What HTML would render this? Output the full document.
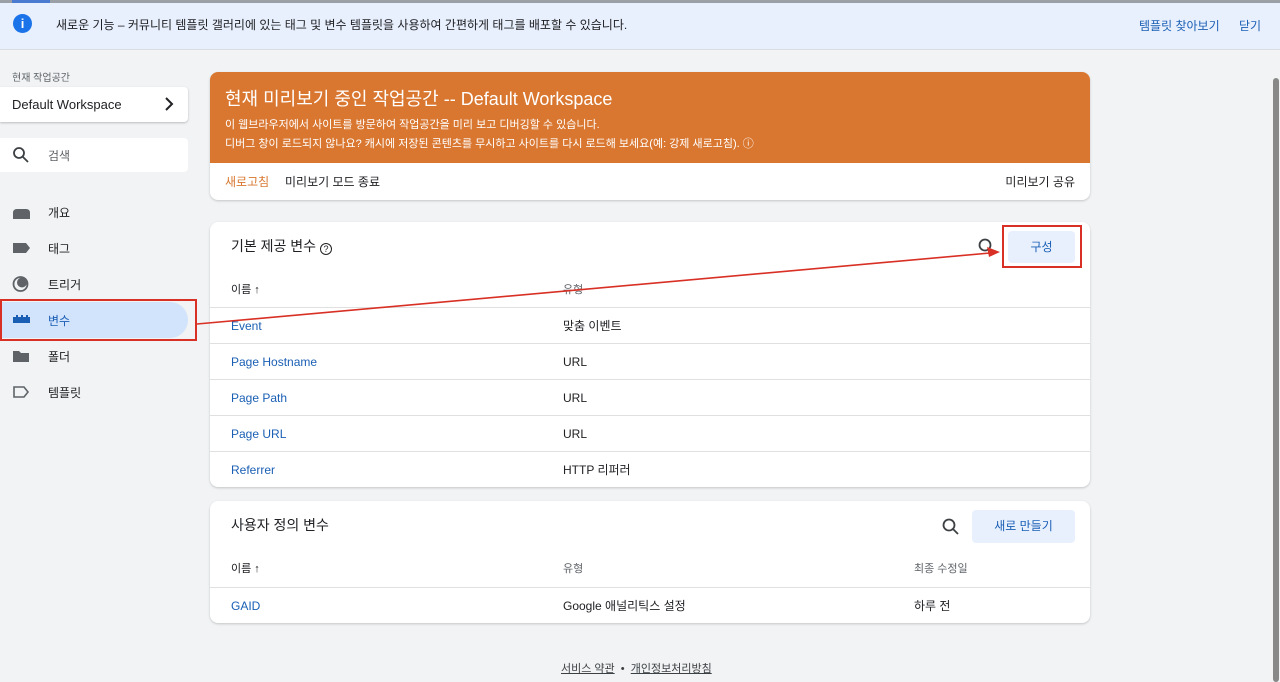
<!DOCTYPE html>
<html><head><meta charset="utf-8"><style>
*{margin:0;padding:0;box-sizing:border-box}
body{width:1280px;height:682px;overflow:hidden;background:#f1f3f4;font-family:"Liberation Sans","Noto Sans CJK KR",sans-serif;color:#202124;position:relative}
.a{position:absolute;white-space:nowrap}
.card{position:absolute;background:#fff;border-radius:8px;box-shadow:0 1px 2px rgba(60,64,67,.25);overflow:hidden}
.row{position:absolute;left:0;right:0;border-top:1px solid #e0e0e0;height:36px}
.row span{position:absolute;top:0;height:36px;line-height:36px;font-size:12px}
.lnk{color:#1a5fb4}
.nav{position:absolute;left:0;font-size:12px;line-height:14px}
</style></head><body>
<div class="a" style="left:0;top:0;width:1280px;height:3px;background:#9aa0a6"></div>
<div class="a" style="left:12px;top:0;width:38px;height:3px;background:#4a7bd0"></div>
<div class="a" style="left:0;top:3px;width:1280px;height:47px;background:#e8f0fe;border-bottom:1px solid #dadce0"></div>
<div class="a" style="left:13px;top:14px;width:19px;height:19px;border-radius:50%;background:#1a73e8;color:#fff;font-size:13px;font-weight:bold;text-align:center;line-height:19px">i</div>
<div class="a" style="left:56px;top:16px;font-size:12px">새로운 기능 – 커뮤니티 템플릿 갤러리에 있는 태그 및 변수 템플릿을 사용하여 간편하게 태그를 배포할 수 있습니다.</div>
<div class="a lnk" style="left:1139px;top:17px;font-size:12px">템플릿 찾아보기</div>
<div class="a lnk" style="left:1239px;top:17px;font-size:12px">닫기</div>
<div class="a" style="left:1273px;top:78px;width:6px;height:604px;background:#888;border-radius:3px"></div>

<div class="a" style="left:12px;top:69px;font-size:10px;color:#5f6368">현재 작업공간</div>
<div class="a" style="left:0;top:87px;width:188px;height:35px;background:#fff;border-radius:0 4px 4px 0;box-shadow:0 1px 2px rgba(60,64,67,.3)"></div>
<div class="a" style="left:12px;top:97px;font-size:13px;font-weight:500">Default Workspace</div>
<svg class="a" style="left:164px;top:97px" width="10" height="14" viewBox="0 0 10 14"><path d="M2 1l6 6-6 6" fill="none" stroke="#202124" stroke-width="2"/></svg>
<div class="a" style="left:0;top:138px;width:188px;height:34px;background:#fff;border-radius:0 4px 4px 0"></div>
<svg class="a" style="left:12px;top:146px" width="18" height="18" viewBox="0 0 18 18"><circle cx="7" cy="7" r="5" fill="none" stroke="#3c4043" stroke-width="1.8"/><path d="M11 11l5 5" stroke="#3c4043" stroke-width="1.8"/></svg>
<div class="a" style="left:48px;top:147px;font-size:12px;color:#5f6368">검색</div>

<div class="a" style="left:0;top:302px;width:188px;height:36px;background:#d2e3fc;border-radius:0 18px 18px 0"></div>
<div class="a" style="left:0;top:299px;width:197px;height:42px;border:2px solid #d93025"></div>
<svg class="a" style="left:12px;top:204px" width="20" height="200" viewBox="0 0 20 200">
<path d="M1 15V9q0-4 4-4h9q4 0 4 4v6z" fill="#5f6368"/>
<path d="M1 39h13l4 5-4 5H1z" fill="#5f6368"/>
<circle cx="8.5" cy="80" r="7" fill="none" stroke="#5f6368" stroke-width="1.8"/><circle cx="10" cy="78.5" r="5" fill="#5f6368"/>
<path d="M1 113h3v-2h2v2h3v-2h2v2h3v-2h2v2h2v6H1z" fill="#1a5fb4"/>
<path d="M1 147h6l2 2h8v9H1z" fill="#5f6368"/>
<path d="M2 183h10l4 5-4 5H2z" fill="none" stroke="#5f6368" stroke-width="1.6"/>
</svg>
<div class="nav" style="left:48px;top:206px">개요</div>
<div class="nav" style="left:48px;top:242px">태그</div>
<div class="nav" style="left:48px;top:278px">트리거</div>
<div class="nav" style="left:48px;top:314px;color:#1a5fb4">변수</div>
<div class="nav" style="left:48px;top:350px">폴더</div>
<div class="nav" style="left:48px;top:386px">템플릿</div>

<div class="card" style="left:210px;top:72px;width:880px;height:128px">
<div style="position:absolute;left:0;top:0;width:880px;height:91px;background:#d97730"></div>
<div class="a" style="left:15px;top:13px;font-size:18px;color:#fff">현재 미리보기 중인 작업공간 -- Default Workspace</div>
<div class="a" style="left:15px;top:44px;font-size:11px;color:#fff">이 웹브라우저에서 사이트를 방문하여 작업공간을 미리 보고 디버깅할 수 있습니다.</div>
<div class="a" style="left:15px;top:63px;font-size:11px;color:#fff">디버그 창이 로드되지 않나요? 캐시에 저장된 콘텐츠를 무시하고 사이트를 다시 로드해 보세요(예: 강제 새로고침). ⓘ</div>
<div class="a" style="left:15px;top:101px;font-size:12px;color:#d97730">새로고침</div>
<div class="a" style="left:75px;top:101px;font-size:12px">미리보기 모드 종료</div>
<div class="a" style="right:15px;top:101px;font-size:12px">미리보기 공유</div>
</div>

<div class="card" style="left:210px;top:222px;width:880px;height:265px">
<div class="a" style="left:21px;top:14px;font-size:14px">기본 제공 변수 <span style="border:1.5px solid #202124;border-radius:50%;display:inline-block;width:12px;height:12px;line-height:10px;text-align:center;font-size:9px;vertical-align:-1px">?</span></div>
<svg class="a" style="left:767px;top:15px" width="20" height="20" viewBox="0 0 20 20"><circle cx="8" cy="8" r="5.5" fill="none" stroke="#3c4043" stroke-width="1.8"/><path d="M12 12l5 5" stroke="#3c4043" stroke-width="1.8"/></svg>
<div class="a" style="left:798px;top:9px;width:67px;height:32px;background:#e8f0fe;border-radius:4px;text-align:center;line-height:32px;font-size:12px;color:#1a5fb4">구성</div>
<div class="a" style="left:21px;top:59px;font-size:11px">이름 ↑</div>
<div class="a" style="left:353px;top:59px;font-size:11px;color:#5f6368">유형</div>
<div class="row" style="top:85px"><span class="lnk" style="left:21px">Event</span><span style="left:353px">맞춤 이벤트</span></div>
<div class="row" style="top:121px"><span class="lnk" style="left:21px">Page Hostname</span><span style="left:353px">URL</span></div>
<div class="row" style="top:157px"><span class="lnk" style="left:21px">Page Path</span><span style="left:353px">URL</span></div>
<div class="row" style="top:193px"><span class="lnk" style="left:21px">Page URL</span><span style="left:353px">URL</span></div>
<div class="row" style="top:229px"><span class="lnk" style="left:21px">Referrer</span><span style="left:353px">HTTP 리퍼러</span></div>
</div>

<div class="card" style="left:210px;top:501px;width:880px;height:122px">
<div class="a" style="left:21px;top:14px;font-size:14px">사용자 정의 변수</div>
<svg class="a" style="left:731px;top:16px" width="20" height="20" viewBox="0 0 20 20"><circle cx="8" cy="8" r="5.5" fill="none" stroke="#3c4043" stroke-width="1.8"/><path d="M12 12l5 5" stroke="#3c4043" stroke-width="1.8"/></svg>
<div class="a" style="left:762px;top:9px;width:103px;height:33px;background:#e8f0fe;border-radius:4px;text-align:center;line-height:33px;font-size:12px;color:#1a5fb4">새로 만들기</div>
<div class="a" style="left:21px;top:59px;font-size:11px">이름 ↑</div>
<div class="a" style="left:353px;top:59px;font-size:11px;color:#5f6368">유형</div>
<div class="a" style="left:704px;top:59px;font-size:11px;color:#5f6368">최종 수정일</div>
<div class="row" style="top:86px"><span class="lnk" style="left:21px">GAID</span><span style="left:353px">Google 애널리틱스 설정</span><span style="left:704px">하루 전</span></div>
</div>

<div class="a" style="left:561px;top:660px;font-size:11px;color:#3c4043"><u>서비스 약관</u> &nbsp;•&nbsp; <u>개인정보처리방침</u></div>

<div class="a" style="left:1002px;top:225px;width:80px;height:43px;border:2px solid #d93025"></div>
<svg class="a" style="left:0;top:0" width="1280" height="682"><line x1="197" y1="324" x2="990" y2="253" stroke="#d93025" stroke-width="1.6"/><path d="M1000 252l-13-5 2 10z" fill="#d93025"/></svg>
</body></html>
